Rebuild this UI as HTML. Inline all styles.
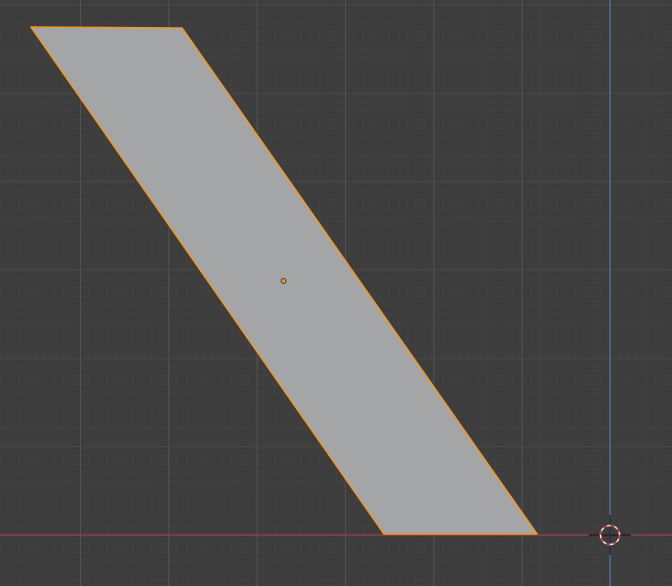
<html><body style="margin:0;background:#3d3d3d">
<svg width="672" height="586" xmlns="http://www.w3.org/2000/svg" style="display:block">
<defs>
<pattern id="mi" x="80" y="93" width="8.833" height="8.833" patternUnits="userSpaceOnUse">
<path d="M0 0H8.833M0 0V8.833" stroke="#444" stroke-width="1" fill="none"/>
</pattern>
<pattern id="ma" x="80" y="93" width="88.33" height="88.33" patternUnits="userSpaceOnUse">
<path d="M0.5 0H88.33M0.5 0V88.33" stroke="#525252" stroke-width="1" fill="none"/>
</pattern>
</defs>
<rect width="672" height="586" fill="#3d3d3d"/>
<rect width="672" height="586" fill="url(#mi)"/>
<rect width="672" height="586" fill="url(#ma)"/>
<line x1="0" y1="535" x2="672" y2="535" stroke="#8a4048" stroke-width="1.5"/>
<line x1="610" y1="0" x2="610" y2="586" stroke="#4a6a9a" stroke-width="1.5"/>
<polygon points="31,27 182,28 537,534 384,534" fill="#a4a5a6" stroke="#f0962a" stroke-width="1.6" stroke-linejoin="round"/>
<circle cx="283.5" cy="281" r="2.5" fill="#f0962a" stroke="#222" stroke-width="0.7"/>
<line x1="589" y1="535" x2="631" y2="535" stroke="#2a1a1a" stroke-width="1.5"/>
<line x1="610" y1="515" x2="610" y2="555" stroke="#1e2a3a" stroke-width="1.5"/>
<circle cx="610" cy="535" r="9.5" fill="none" stroke="#e6e6e6" stroke-width="1.6"/>
<circle cx="610" cy="535" r="9.5" fill="none" stroke="#d03030" stroke-width="1.6" stroke-dasharray="4 3.5"/>
</svg>
</body></html>
